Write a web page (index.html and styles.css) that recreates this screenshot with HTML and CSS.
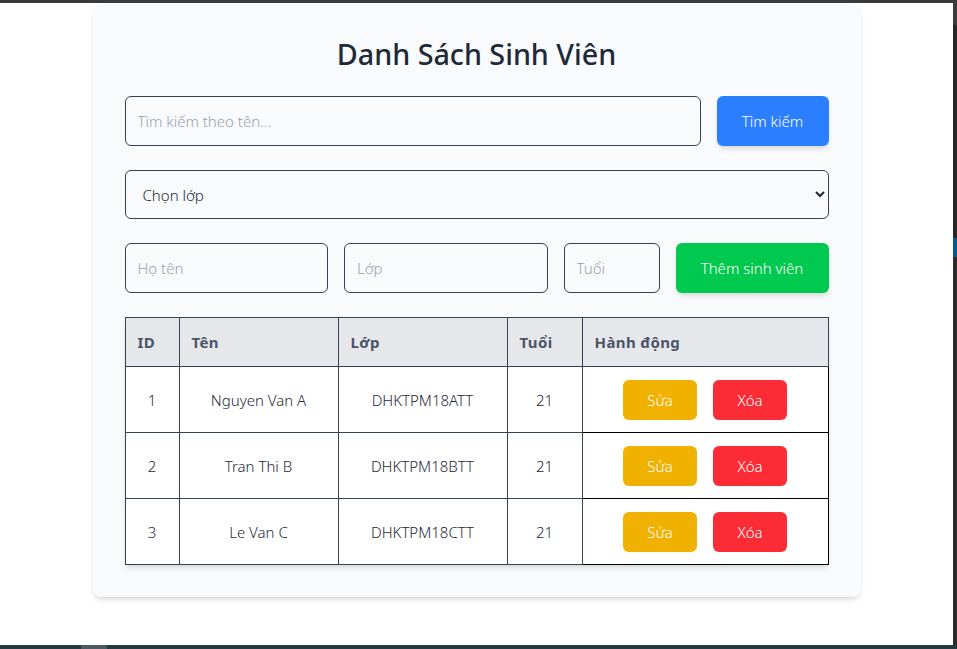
FILE: index.html
```html
<!DOCTYPE html>
<html lang="vi">
<head>
<meta charset="utf-8">
<title>Danh Sách Sinh Viên</title>
<link rel="stylesheet" href="styles.css">
</head>
<body>
<div class="topbar"></div>
<div class="middle">
  <main class="page">
    <section class="card">
      <h1 class="title">Danh Sách Sinh Viên</h1>
      <div class="row search-row">
        <input class="field grow" type="text" placeholder="Tìm kiếm theo tên...">
        <button class="btn btn-blue">Tìm kiếm</button>
      </div>
      <div class="row">
        <select class="field select grow">
          <option>Chọn lớp</option>
        </select>
      </div>
      <div class="row add-row">
        <input class="field grow" type="text" placeholder="Họ tên">
        <input class="field grow" type="text" placeholder="Lớp">
        <input class="field age" type="text" placeholder="Tuổi">
        <button class="btn btn-green">Thêm sinh viên</button>
      </div>
      <table class="table">
        <colgroup>
          <col class="c-id"><col class="c-name"><col class="c-class"><col class="c-age"><col>
        </colgroup>
        <thead>
          <tr><th>ID</th><th>Tên</th><th>Lớp</th><th>Tuổi</th><th>Hành động</th></tr>
        </thead>
        <tbody>
          <tr><td>1</td><td>Nguyen Van A</td><td>DHKTPM18ATT</td><td>21</td>
            <td class="actions"><div class="action-box"><button class="btn btn-sm btn-yellow">Sửa</button><button class="btn btn-sm btn-red">Xóa</button></div></td></tr>
          <tr><td>2</td><td>Tran Thi B</td><td>DHKTPM18BTT</td><td>21</td>
            <td class="actions"><div class="action-box"><button class="btn btn-sm btn-yellow">Sửa</button><button class="btn btn-sm btn-red">Xóa</button></div></td></tr>
          <tr><td>3</td><td>Le Van C</td><td>DHKTPM18CTT</td><td>21</td>
            <td class="actions"><div class="action-box"><button class="btn btn-sm btn-yellow">Sửa</button><button class="btn btn-sm btn-red">Xóa</button></div></td></tr>
        </tbody>
      </table>
    </section>
  </main>
  <div class="sidestrip">
    <div class="s1"></div><div class="s2"></div><div class="s3"></div><div class="s4"></div>
  </div>
</div>
<div class="bottombar"><div class="bb-seg"></div></div>
</body>
</html>
```

FILE: styles.css
```css
* { box-sizing: border-box; }
html, body { height: 100%; }
body {
  margin: 0;
  background: #ffffff;
  font-family: "Noto Sans", "Open Sans", sans-serif;
  color: #1e2939;
  display: flex;
  flex-direction: column;
  overflow: hidden;
}
.topbar { height: 3px; background: #3b3b3b; flex: none; }
.middle { flex: 1; display: flex; min-height: 0; }
.page { flex: 1; display: flex; justify-content: center; align-items: flex-start; padding-top: 1px; }
.sidestrip { width: 4px; background: #262626; display: flex; flex-direction: column; }
.sidestrip .s1 { height: 22px; background: #3a3a3a; }
.sidestrip .s2 { height: 213px; background: #262626; }
.sidestrip .s3 { height: 19px; background: #0a5a8c; }
.sidestrip .s4 { flex: 1; background: #2a2a2a; }
.bottombar { height: 4px; background: #233a40; flex: none; padding-left: 81px; }
.bb-seg { width: 26px; height: 100%; background: #4a5c62; }

.card {
  width: 768px;
  background: #f9fafb;
  border-radius: 8px;
  box-shadow: 0 4px 6px -1px rgba(0,0,0,0.1), 0 2px 4px -2px rgba(0,0,0,0.1);
  padding: 32px;
}
.title {
  margin: 0 0 24px;
  text-align: center;
  font-size: 28.7px;
  line-height: 36px;
  font-weight: 500;
  color: #1e2939;
}
.row { display: flex; gap: 16px; margin-bottom: 24px; }
.grow { flex: 1; min-width: 0; }
.field {
  font-family: inherit;
  font-size: 15px;
  line-height: 24px;
  padding: 12px;
  border: 1px solid #364153;
  border-radius: 6px;
  background: transparent;
  color: #1e2939;
  height: 50px;
  font-weight: 300;
}
.field::placeholder { color: #99a1af; }
.select { height: 49px; padding: 0 12px 0 13px; font-size: 15px; }
.age { width: 96px; flex: none; }
.btn {
  font-family: inherit;
  font-size: 15px;
  line-height: 24px;
  font-weight: 300;
  color: #ffffff;
  border: none;
  border-radius: 6px;
  padding: 8px 24px;
  cursor: pointer;
}
.btn-blue { background: #2b7fff; width: 112px; padding: 0; box-shadow: 0 4px 6px -1px rgba(0,0,0,0.1), 0 2px 4px -2px rgba(0,0,0,0.1); }
.btn-green { background: #00c950; width: 153px; padding: 0; box-shadow: 0 4px 6px -1px rgba(0,0,0,0.1), 0 2px 4px -2px rgba(0,0,0,0.1); }
.btn-sm { width: 74px; height: 40px; padding: 0; }
.btn-yellow { background: #f0b100; }
.btn-red { background: #fb2c36; }

.table {
  width: 704px;
  table-layout: fixed;
  border-collapse: collapse;
  background: #ffffff;
  box-shadow: 0 4px 6px -1px rgba(0,0,0,0.1), 0 2px 4px -2px rgba(0,0,0,0.1);
}
.c-id { width: 54px; }
.c-name { width: 159px; }
.c-class { width: 169px; }
.c-age { width: 75px; }
.table th {
  background: #e5e7eb;
  border: 1px solid #364153;
  text-align: left;
  padding: 12px;
  height: 49px;
  font-size: 15px;
  font-weight: 700;
  letter-spacing: 0.4px;
  color: #4a5565;
}
.table td {
  border: 1px solid #364153;
  text-align: center;
  height: 66px;
  padding: 0 12px;
  font-size: 15px;
  font-weight: 300;
  color: #1e2939;
}
.table td.actions { border: 1px solid #000000; padding: 0; }
.action-box { display: flex; justify-content: center; gap: 16px; }
```
